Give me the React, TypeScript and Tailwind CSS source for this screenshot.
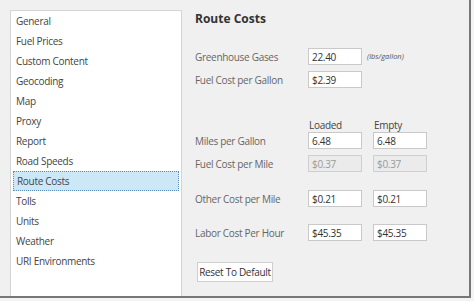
import React from "react";

const items = [
  "General",
  "Fuel Prices",
  "Custom Content",
  "Geocoding",
  "Map",
  "Proxy",
  "Report",
  "Road Speeds",
  "Route Costs",
  "Tolls",
  "Units",
  "Weather",
  "URI Environments",
];

function Input({ value, disabled }: { value: string; disabled?: boolean }) {
  return (
    <div
      className={
        "w-[54px] h-[17px] border flex items-center pl-[3px] text-[10px] tracking-[-0.3px] leading-none " +
        (disabled
          ? "bg-[#ebebeb] border-[#cfcfcf] text-[#9a9a9a]"
          : "bg-white border-[#c9c9c9] text-[#333]")
      }
    >
      {value}
    </div>
  );
}

function Row({
  label,
  children,
  className = "",
}: {
  label: string;
  children: React.ReactNode;
  className?: string;
}) {
  return (
    <div className={"flex items-center h-[17px] " + className}>
      <div className="w-[113px] text-[10px] tracking-[-0.3px] text-[#666] leading-none">{label}</div>
      {children}
    </div>
  );
}

export default function App() {
  return (
    <div
      className="w-[474px] h-[301px] bg-[#f4f4f4] overflow-hidden"
      style={{ fontFamily: '"Open Sans", "Noto Sans", sans-serif' }}
    >
      <div className="w-[471px] h-[298px] bg-[#f0f0f0] border-r-2 border-b-2 border-[#777] flex pl-[10px] pt-[10px]">
        <div className="w-[172px] h-full bg-white border-t border-l border-r border-[#d4d4d4] flex flex-col px-[2px]">
          {items.map((it) => (
            <div
              key={it}
              className={
                "h-[20px] flex items-center pl-[3px] text-[10px] tracking-[-0.3px] text-[#444] leading-none " +
                (it === "Route Costs"
                  ? "bg-[#cce8f7] border border-dotted border-[#5f8fb8] pl-[2px]"
                  : "")
              }
            >
              {it}
            </div>
          ))}
        </div>
        <div className="flex flex-col pl-[13px]">
          <div className="h-[18px] flex items-center text-[12px] font-bold text-[#333] leading-none">
            Route Costs
          </div>
          <Row label="Greenhouse Gases" className="mt-[20px]">
            <Input value="22.40" />
            <span className="ml-[5px] text-[7.5px] italic text-[#555] leading-none">(lbs/gallon)</span>
          </Row>
          <Row label="Fuel Cost per Gallon" className="mt-[6px]">
            <Input value="$2.39" />
          </Row>
          <div className="flex h-[14px] items-center mt-[30px] text-[10px] tracking-[-0.3px] text-[#444] leading-none">
            <div className="w-[113px]" />
            <div className="w-[54px] pl-[1px]">Loaded</div>
            <div className="ml-[11px] pl-[1px]">Empty</div>
          </div>
          <Row label="Miles per Gallon">
            <Input value="6.48" />
            <div className="ml-[11px]">
              <Input value="6.48" />
            </div>
          </Row>
          <Row label="Fuel Cost per Mile" className="mt-[6px]">
            <Input value="$0.37" disabled />
            <div className="ml-[11px]">
              <Input value="$0.37" disabled />
            </div>
          </Row>
          <Row label="Other Cost per Mile" className="mt-[18px]">
            <Input value="$0.21" />
            <div className="ml-[11px]">
              <Input value="$0.21" />
            </div>
          </Row>
          <Row label="Labor Cost Per Hour" className="mt-[17px]">
            <Input value="$45.35" />
            <div className="ml-[11px]">
              <Input value="$45.35" />
            </div>
          </Row>
          <div className="mt-[21px] pl-[2px]">
            <div className="w-[76px] h-[20px] bg-white border border-[#cfcfcf] flex items-center justify-center whitespace-nowrap text-[10px] tracking-[-0.3px] text-[#333] leading-none">
              Reset To Default
            </div>
          </div>
        </div>
      </div>
    </div>
  );
}
